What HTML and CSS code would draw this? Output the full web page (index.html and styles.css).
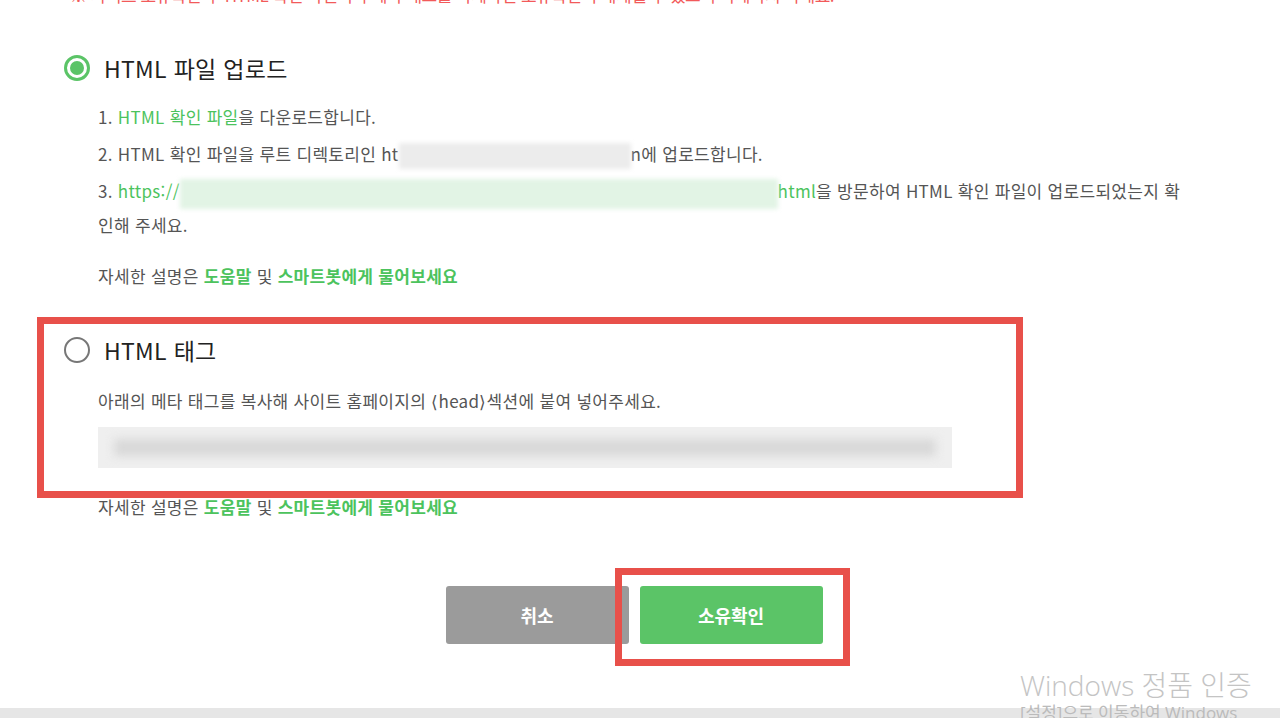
FILE: index.html
```html
<!DOCTYPE html>
<html lang="ko">
<head>
<meta charset="UTF-8">
<title>사이트 소유확인</title>
<link rel="stylesheet" href="styles.css">
</head>
<body>

<div class="page">
  <p class="top-note">※ 사이트 소유확인 후 HTML 확인 파일이나 메타 태그를 삭제하면 소유확인이 해제될 수 있으니 삭제하지 마세요.</p>

  <div class="option">
    <div class="option-head">
      <span class="radio checked"></span>
      <span class="option-title">HTML 파일 업로드</span>
    </div>
    <div class="option-body">
      <p class="step">1. <span class="green">HTML 확인 파일</span>을 다운로드합니다.</p>
      <p class="step">2. HTML 확인 파일을 루트 디렉토리인 ht<span class="blur-gray"></span>n에 업로드합니다.</p>
      <p class="step">3. <span class="green">https://<span class="blur-green"></span>html</span>을 방문하여 HTML 확인 파일이 업로드되었는지 확인해 주세요.</p>
      <p class="help">자세한 설명은 <span class="green strong">도움말</span> 및 <span class="green strong">스마트봇에게 물어보세요</span></p>
    </div>
  </div>

  <div class="option second">
    <div class="option-head">
      <span class="radio"></span>
      <span class="option-title">HTML 태그</span>
    </div>
    <div class="option-body">
      <p class="desc">아래의 메타 태그를 복사해 사이트 홈페이지의 ⟨head⟩섹션에 붙여 넣어주세요.</p>
      <div class="meta-box"><div class="meta-blur"></div></div>
      <p class="help">자세한 설명은 <span class="green strong">도움말</span> 및 <span class="green strong">스마트봇에게 물어보세요</span></p>
    </div>
    <div class="mark mark-option"></div>
  </div>

  <div class="buttons">
    <button class="btn btn-cancel">취소</button>
    <button class="btn btn-ok">소유확인</button>
    <div class="mark mark-button"></div>
  </div>
</div>

<div class="taskbar"></div>
<div class="watermark">
  <div class="wm-title">Windows 정품 인증</div>
  <div class="wm-sub">[설정]으로 이동하여 Windows</div>
</div>

</body>
</html>
```

FILE: styles.css
```css
body {
  margin: 0;
  padding: 0;
  background-color: white;
  font-family: "Noto Sans CJK KR", "Noto Sans", sans-serif;
  color: #555;
  height: 718px;
  overflow: hidden;
  position: relative;
}

p {
  margin: 0;
}

.page {
  padding-left: 64px;
}

.top-note {
  color: #f25a5a;
  font-size: 17px;
  line-height: 20px;
  margin-top: -15px;
  margin-left: 6px;
  letter-spacing: -0.5px;
  white-space: nowrap;
}

.option-head {
  display: flex;
  align-items: center;
  height: 30px;
}

.option:first-of-type .option-head {
  margin-top: 48px;
}

.radio {
  width: 26px;
  height: 26px;
  box-sizing: border-box;
  border: 2px solid #777;
  border-radius: 50%;
  position: relative;
}

.radio.checked {
  border: 3px solid #5bc467;
}

.radio.checked::after {
  content: "";
  position: absolute;
  left: 3px;
  top: 3px;
  width: 14px;
  height: 14px;
  border-radius: 50%;
  background-color: #5bc467;
}

.option-title {
  margin-left: 14px;
  font-size: 23px;
  color: #222;
  letter-spacing: 0.3px;
}

.option-body {
  margin-left: 34px;
  width: 1092px;
  font-size: 17px;
  letter-spacing: 0.3px;
}

.step {
  line-height: 31px;
  margin-bottom: 6px;
}

.step:first-child {
  margin-top: 18px;
}

.green {
  color: #4cc35d;
}

.strong {
  font-weight: bold;
}

.blur-gray {
  display: inline-block;
  width: 232px;
  height: 26px;
  vertical-align: middle;
  background-color: #ececec;
  filter: blur(2px);
}

.blur-green {
  display: inline-block;
  width: 598px;
  height: 30px;
  vertical-align: middle;
  background-color: #e2f4e5;
  filter: blur(2px);
}

.help {
  margin-top: 20px;
  line-height: 31px;
}

.second {
  position: relative;
}

.second .option-head {
  margin-top: 44px;
}

.desc {
  margin-top: 20px;
  line-height: 31px;
}

.meta-box {
  margin-top: 11px;
  width: 854px;
  height: 41px;
  background-color: #efefef;
  overflow: hidden;
}

.meta-blur {
  margin: 12px 16px;
  height: 17px;
  background-color: #d8d8d8;
  filter: blur(5px);
}

.second .help {
  margin-top: 23px;
}

.mark {
  position: absolute;
  border: 7px solid #e8504a;
  box-sizing: border-box;
}

.mark-option {
  left: -27px;
  top: -18px;
  width: 986px;
  height: 181px;
}

.buttons {
  position: relative;
  display: flex;
  justify-content: center;
  gap: 11px;
  margin-top: 64px;
  margin-left: -64px;
  padding-right: 12px;
}

.btn {
  width: 183px;
  height: 58px;
  border: none;
  border-radius: 3px;
  color: white;
  font-family: "Noto Sans CJK KR", sans-serif;
  font-size: 18px;
  font-weight: bold;
}

.btn-cancel {
  background-color: #9b9b9b;
}

.btn-ok {
  background-color: #5bc467;
}

.mark-button {
  left: 615px;
  top: -18px;
  width: 235px;
  height: 98px;
}

.taskbar {
  position: absolute;
  left: 0;
  right: 0;
  bottom: 0;
  height: 10px;
  background-color: #e6e6e6;
}

.watermark {
  position: absolute;
  left: 1020px;
  top: 667px;
  color: #c4c4c4;
  font-family: "Open Sans", "Noto Sans CJK KR", sans-serif;
  white-space: nowrap;
}

.wm-title {
  font-size: 28px;
  line-height: 36px;
  font-weight: 300;
}

.wm-sub {
  font-size: 17px;
  line-height: 20px;
  color: #bbb;
}
```
